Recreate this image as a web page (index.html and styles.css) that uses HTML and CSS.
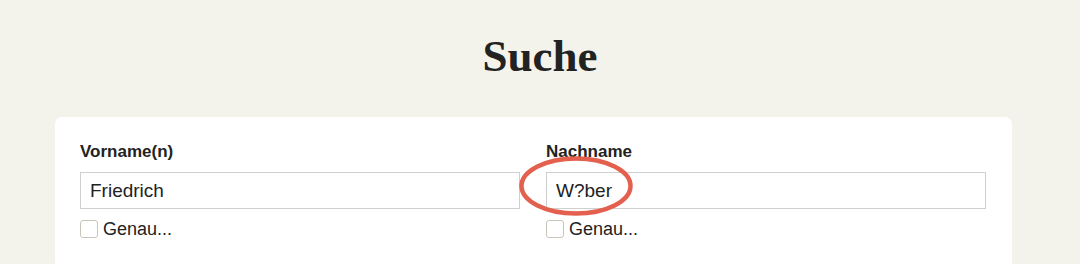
FILE: index.html
```html
<!DOCTYPE html>
<html>
  <head>
    <meta charset="UTF-8">
    <title>Suche</title>
    <link rel="stylesheet" href="styles.css">
  </head>
  <body>
    <h1 class="title">Suche</h1>

    <div class="card">
      <div class="field">
        <label class="field-label" for="firstName">Vorname(n)</label>
        <input class="field-input" id="firstName" type="text" value="Friedrich">
        <label class="exact">
          <span class="exact-box"></span>
          <span>Genau...</span>
        </label>
      </div>

      <div class="field">
        <label class="field-label" for="lastName">Nachname</label>
        <input class="field-input" id="lastName" type="text" value="W?ber">
        <label class="exact">
          <span class="exact-box"></span>
          <span>Genau...</span>
        </label>
        <svg class="marker" width="120" height="64" viewBox="0 0 120 64">
          <ellipse cx="60" cy="32" rx="54.5" ry="27.5" fill="none" stroke="#e3604f" stroke-width="4.5"/>
        </svg>
      </div>
    </div>
  </body>
</html>
```

FILE: styles.css
```css
:root {
  --bg-color: #f3f3ec;
  --card-color: #ffffff;
  --text-color: #222222;
  --border-color: #cfcfcf;
}

body {
  margin: 0;
  background: var(--bg-color);
  color: var(--text-color);
  font-family: 'Liberation Sans', Arial, sans-serif;
}

.title {
  margin: 0;
  padding-top: 30px;
  height: 88px;
  box-sizing: border-box;
  text-align: center;
  font-family: 'Liberation Serif', 'DejaVu Serif', serif;
  font-size: 45px;
  font-weight: bold;
  line-height: 52px;
  color: #222222;
}

.card {
  width: 957px;
  margin: 29px 0 0 55px;
  padding: 24px 26px 30px 25px;
  box-sizing: border-box;
  background: var(--card-color);
  border-radius: 7px;
  display: flex;
  gap: 26px;
}

.field {
  width: 440px;
  position: relative;
}

.field-label {
  display: block;
  font-size: 17px;
  font-weight: bold;
  line-height: 22px;
  margin-bottom: 9px;
}

.field-input {
  display: block;
  width: 100%;
  height: 37px;
  box-sizing: border-box;
  margin: 0;
  padding: 0 9px;
  border: 1px solid var(--border-color);
  border-radius: 0;
  font-family: 'Liberation Sans', Arial, sans-serif;
  font-size: 19px;
  color: var(--text-color);
  background: #ffffff;
  outline: none;
}

.exact {
  display: flex;
  align-items: center;
  gap: 5px;
  margin-top: 10px;
  font-size: 18px;
  line-height: 20px;
}

.exact-box {
  width: 16px;
  height: 16px;
  border: 1px solid #c9c5b9;
  border-radius: 3px;
  background: #ffffff;
}

.marker {
  position: absolute;
  left: -30px;
  top: 13px;
}
```
